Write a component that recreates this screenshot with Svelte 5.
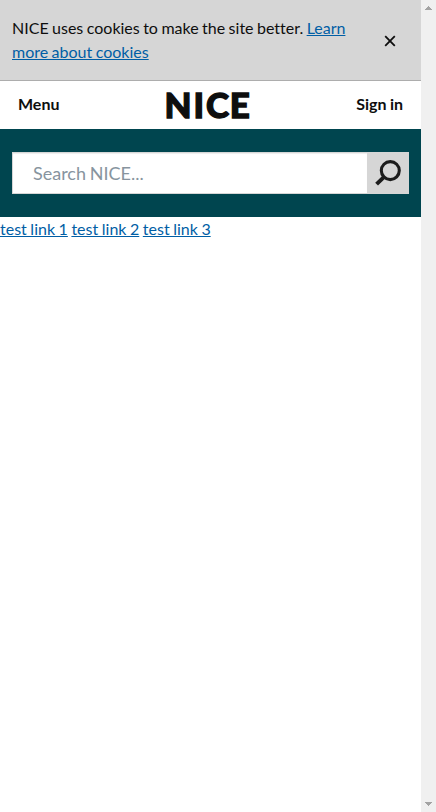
<script>
  const links = ['test link 1', 'test link 2', 'test link 3'];
</script>

<div class="viewport">
  <div class="page">
    <section class="cookies">
      <p>NICE uses cookies to make the site better. <a href="#cookies">Learn more about cookies</a></p>
      <button class="close" aria-label="Close">
        <svg width="12" height="12" viewBox="0 0 12 12"><path d="M1.2 1.2 10.8 10.8M10.8 1.2 1.2 10.8" stroke="#0e0e0e" stroke-width="1.8" /></svg>
      </button>
    </section>
    <header>
      <a class="nav" href="#menu">Menu</a>
      <a class="logo" href="#home" aria-label="NICE">
        <svg width="86" height="30" viewBox="0 0 86 30">
          <text x="-0.6 28.6 40.9 64.8" y="28.2" font-size="35">NICE</text>
        </svg>
      </a>
      <a class="nav end" href="#signin">Sign in</a>
    </header>
    <form class="search">
      <input type="text" placeholder="Search NICE..." aria-label="Search NICE" />
      <button type="button" aria-label="Search">
        <svg width="42" height="42" viewBox="0 0 42 42" fill="none" stroke="#1c1c1c">
          <circle cx="23.3" cy="18.6" r="9" stroke-width="3.1" />
          <path d="M17.1 24.8 9.6 32.2" stroke-width="4" />
        </svg>
      </button>
    </form>
    <main>{#each links as link}<a href="#test">{link}</a>{' '}{/each}</main>
  </div>
  <div class="scrollbar" aria-hidden="true">
    <svg width="7" height="4" viewBox="0 0 7 4" shape-rendering="crispEdges"><path d="M3 0h1v1h1v1h1v1h1v1H0V3h1V2h1V1h1z" fill="#a3a3a3" /></svg>
    <svg width="7" height="4" viewBox="0 0 7 4" shape-rendering="crispEdges"><path d="M0 0h7v1H6v1H5v1H4v1H3V3H2V2H1V1H0z" fill="#a3a3a3" /></svg>
  </div>
</div>

<style>
  :global(body) { margin: 0; overflow: hidden; }
  .viewport { display: flex; height: 812px; width: 436px; background: #fff; color: #0e0e0e; font: 16px/24px Lato, sans-serif; word-spacing: -0.55px; font-variant-ligatures: none; }
  .page { width: 421px; }
  a { color: #005ea5; }
  .cookies { box-sizing: border-box; height: 81px; padding: 16px 12px; display: flex; background: #d6d6d6; border-bottom: 1px solid #adadad; }
  p { margin: 0; width: 350px; word-spacing: -0.65px; }
  button { border: 0; padding: 0; background: none; }
  .close { width: 38px; height: 38px; margin: 6px 0 0 9px; display: flex; align-items: center; justify-content: center; }
  header { height: 48px; box-sizing: border-box; padding: 0 18px; display: grid; grid-template-columns: 147px 86px 1fr; align-items: center; }
  .nav { color: #0e0e0e; text-decoration: none; font-weight: 700; padding-bottom: 2px; }
  .end { text-align: right; }
  .logo { height: 30px; }
  .logo svg { display: block; overflow: visible; }
  .logo text { font-family: Lato, sans-serif; font-weight: 900; word-spacing: 0; fill: #0e0e0e; stroke: #0e0e0e; stroke-width: 1.3px; }
  .search { height: 88px; box-sizing: border-box; padding: 23px 12px; display: flex; background: #00454f; }
  input { box-sizing: border-box; width: 355px; height: 42px; border: 1px solid #d6d6d6; border-right: 0; padding: 0 20px; margin: 0; font: 18px Lato, sans-serif; word-spacing: -0.8px; background: #fff; box-shadow: inset 0 1px 1px rgba(0, 0, 0, 0.075); border-radius: 0; }
  input::placeholder { color: #87949e; opacity: 1; }
  .search button { width: 42px; height: 42px; background: #d6d6d6; }
  .search svg { display: block; }
  .scrollbar { box-sizing: border-box; width: 15px; padding: 6px 0 6px; background: #f0f0f0; display: flex; flex-direction: column; align-items: center; justify-content: space-between; }
</style>
